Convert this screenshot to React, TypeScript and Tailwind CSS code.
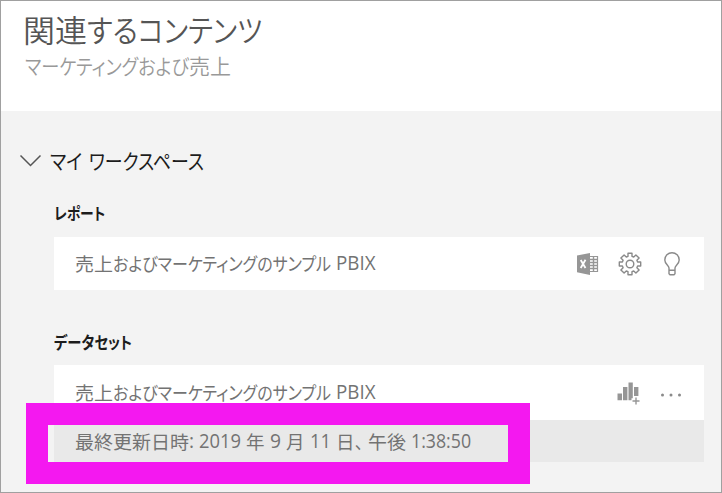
import { useLayoutEffect, useRef, useState } from 'react';
import type { ReactNode } from 'react';

const jp = "font-['Noto_Sans_CJK_JP',sans-serif] [font-feature-settings:'palt']";
const latin = "font-['Open_Sans','Noto_Sans_CJK_JP',sans-serif] text-[1.04em]";

/** A run of text condensed horizontally so that it fills the given width. */
function Run({ w, ml = 0, en = false, children }: { w: number; ml?: number; en?: boolean; children: ReactNode }) {
  const ref = useRef<HTMLSpanElement>(null);
  const [scale, setScale] = useState(1);
  useLayoutEffect(() => {
    const fit = () => {
      if (ref.current) setScale(w / ref.current.offsetWidth);
    };
    fit();
    document.fonts.ready.then(fit);
  }, [w]);
  return (
    <span className="block shrink-0 whitespace-nowrap" style={{ width: w, marginLeft: ml }}>
      <span ref={ref} className={`inline-block origin-left ${en ? latin : jp}`} style={{ transform: `scaleX(${scale})` }}>
        {children}
      </span>
    </span>
  );
}

function ExcelIcon() {
  return (
    <svg width="22" height="22" viewBox="0 0 22 22" className="block">
      <path d="M12 3.500h8.500v15H12" fill="#fff" stroke="#969696" strokeWidth="1.200" />
      <path d="M13 6.500h7M13 9.500h7M13 12.500h7M13 15.500h7M16.500 4v14" stroke="#969696" strokeWidth="1.400" />
      <path d="M0 2.500 13 0v22L0 19.300z" fill="#969696" />
      <path d="m3.700 7 4.800 8M8.500 6.800 3.700 15" stroke="#fff" strokeWidth="1.800" />
    </svg>
  );
}

function GearIcon() {
  return (
    <svg width="24" height="24" viewBox="0 0 24 24" fill="none" stroke="#8a8a8a" strokeWidth="1.400" strokeLinejoin="round" className="block">
      <path d="M10 1.300h4v3l1.700.7 2.200-2.100 3.200 3.200-2.200 2.200.7 1.700h3.100v4h-3.100l-.7 1.700 2.200 2.200-3.200 3.200-2.200-2.100-1.700.7v3h-4v-3l-1.700-.7-2.200 2.100-3.200-3.200 2.200-2.200-.7-1.700H1.300v-4h3.100l.7-1.700-2.200-2.200 3.200-3.200L8.300 5l1.700-.7z" />
      <circle cx="12" cy="12" r="3.800" />
    </svg>
  );
}

function BulbIcon() {
  return (
    <svg width="16" height="24" viewBox="0 0 16 24" fill="none" stroke="#8a8a8a" strokeWidth="1.400" className="block">
      <path d="M5 18v-2C5 13.500.8 12 .8 7.900a7.200 7.200 0 0 1 14.400 0C15.200 12 11 13.500 11 16v5.800l-1 1H6l-1-1zM5 18.300h6" />
    </svg>
  );
}

function ChartIcon() {
  return (
    <svg width="24" height="24" viewBox="0 0 24 24" className="block">
      <path d="M.5 12.500H5v6.800H.5zM6 6h4.400v13.300H6zM11.500 1.500h4.300v15.800h-1.300v2h-3zM17 6h4.400v9H17z" fill="#969696" />
      <path d="M15.500 20h7M19 16.500v7" stroke="#969696" strokeWidth="1.400" />
    </svg>
  );
}

function SampleName() {
  return (
    <div className="flex text-[18.5px] leading-[28px] text-[#737373]">
      <Run w={38}>売上</Run>
      <Run w={218}>およびマーケティングのサンプル</Run>
      <Run w={39} ml={5} en>PBIX</Run>
    </div>
  );
}

export default function App() {
  return (
    <div className="relative h-[493px] w-[722px] overflow-hidden border border-[#a0a0a0] bg-[#f3f3f3]">
      <header className="h-[110px] bg-white pt-[4px] pl-[22px]">
        <h1 className="flex h-[47px] text-[31px] leading-[48px] font-[350] text-[#555]">
          <Run w={64}>関連</Run>
          <Run w={51}>する</Run>
          <Run w={124}>コンテンツ</Run>
        </h1>
        <p className="flex h-[28px] pl-[2px] text-[21px] leading-[26px] font-[350] text-[#999]">
          <Run w={164}>マーケティングおよび</Run>
          <Run w={42}>売上</Run>
        </p>
      </header>
      <main className="pr-[17px] pl-[53px]">
        <div className="-ml-[35px] flex h-[87px] items-center pt-[12px]">
          <svg width="23" height="14" viewBox="0 0 23 14" fill="none" stroke="#555" strokeWidth="1.500">
            <path d="m1.500 1.500 10 10 10-10" />
          </svg>
          <h2 className="ml-[8px] flex text-[21px] leading-[28px] text-[#1c1c1c]">
            <Run w={32}>マイ</Run>
            <Run w={115} ml={7}>ワークスペース</Run>
          </h2>
        </div>
        <h3 className="flex h-[39px] pt-px text-[16.5px] leading-[28px] font-bold text-[#1c1c1c]">
          <Run w={51}>レポート</Run>
        </h3>
        <div className="flex h-[53px] items-center justify-between bg-white pr-[24px] pl-[21px]">
          <SampleName />
          <div className="flex items-center">
            <ExcelIcon />
            <span className="ml-[19px]"><GearIcon /></span>
            <span className="ml-[22px]"><BulbIcon /></span>
          </div>
        </div>
        <h3 className="mt-[38px] flex h-[37px] text-[16.5px] leading-[28px] font-bold text-[#1c1c1c]">
          <Run w={78}>データセット</Run>
        </h3>
        <div className="flex h-[55px] items-center justify-between bg-white pr-[22px] pl-[21px]">
          <SampleName />
          <div className="flex items-center">
            <ChartIcon />
            <svg width="22" height="4" viewBox="0 0 22 4" fill="#8a8a8a" className="mt-[5px] ml-[19px] block">
              <circle cx="2.500" cy="2" r="1.500" />
              <circle cx="11" cy="2" r="1.500" />
              <circle cx="19.500" cy="2" r="1.500" />
            </svg>
          </div>
        </div>
        <div className="flex h-[42px] items-center bg-[#e9e9e9] pl-[21px] text-[18.5px] leading-[28px] text-[#737373]">
          <Run w={114}>最終更新日時</Run>
          <Run w={5} en>:</Run>
          <Run w={42} ml={5} en>2019</Run>
          <Run w={19} ml={5}>年</Run>
          <Run w={11} ml={5} en>9</Run>
          <Run w={19} ml={5}>月</Run>
          <Run w={21} ml={5} en>11</Run>
          <Run w={19} ml={5}>日</Run>
          <Run w={8}>、</Run>
          <Run w={38} ml={5}>午後</Run>
          <Run w={60} ml={5} en>1:38:50</Run>
        </div>
      </main>
      <div className="absolute top-[402px] left-[25px] h-[81px] w-[504px] border-[22px] border-[#f418f0]" />
    </div>
  );
}
